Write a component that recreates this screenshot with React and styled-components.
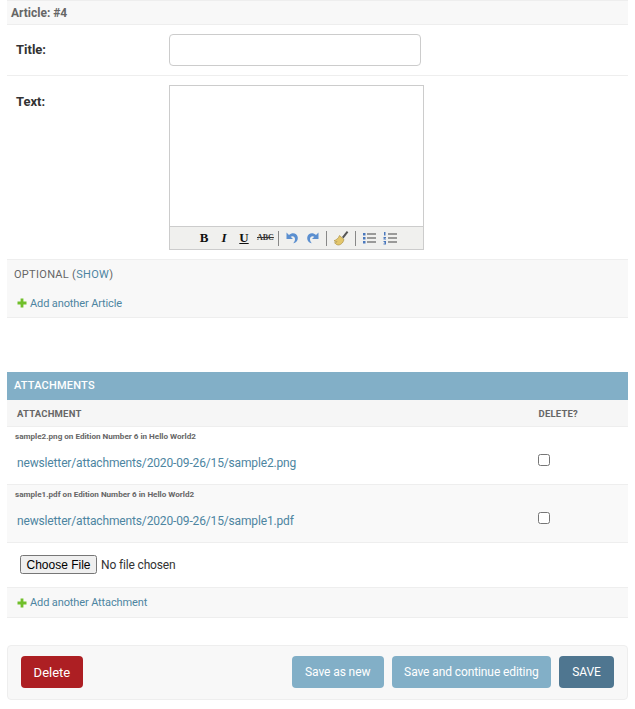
import React from 'react';
import styled, { createGlobalStyle } from 'styled-components';

const GlobalStyle = createGlobalStyle`
  html, body {
    margin: 0;
    padding: 0;
    background: #fff;
  }
  body {
    font-family: Roboto, "Liberation Sans", sans-serif;
    font-size: 14px;
    color: #333;
  }
`;

const Page = styled.div`
  width: 621px;
  margin: 0 7px;
`;

const InlineHead = styled.h3`
  margin: 0;
  height: 24px;
  box-sizing: border-box;
  border-top: 1px solid #eee;
  padding: 4px 4px 0;
  background: #f8f8f8;
  color: #666;
  font-size: 12px;
  line-height: 16px;
  font-weight: 700;
`;

const FormRow = styled.div`
  display: flex;
  align-items: flex-start;
  box-sizing: border-box;
  height: ${(p) => p.$height}px;
  padding-top: 9px;
  border-top: 1px solid #eee;
`;

const Label = styled.label`
  width: 162px;
  padding: ${(p) => p.$pad}px 0 0 9px;
  box-sizing: border-box;
  font-size: 13px;
  line-height: 16px;
  font-weight: 700;
  color: #333;
`;

const TextInput = styled.input`
  width: 252px;
  height: 32px;
  box-sizing: border-box;
  border: 1px solid #ccc;
  border-radius: 4px;
  background: #fff;
`;

const Editor = styled.div`
  width: 255px;
  height: 165px;
  box-sizing: border-box;
  border: 1px solid #ccc;
  display: flex;
  flex-direction: column;
`;

const EditorArea = styled.div`
  flex: 1;
  background: #fff;
`;

const Toolbar = styled.div`
  height: 22px;
  border-top: 1px solid #ccc;
  background: #f0f0ee;
  display: flex;
  align-items: center;
  gap: 5px;
  padding-left: 26px;
`;

const ToolGlyph = styled.span`
  width: ${(p) => p.$width || 16}px;
  text-align: center;
  font-family: "Liberation Serif", serif;
  font-size: ${(p) => p.$size || 13}px;
  line-height: 16px;
  font-weight: 700;
  color: ${(p) => p.$color || '#111'};
  font-style: ${(p) => (p.$italic ? 'italic' : 'normal')};
  text-decoration: ${(p) => p.$line || 'none'};
`;

const ToolSep = styled.span`
  width: 1px;
  height: 15px;
  background: #888;
`;

const ToolIcon = styled.svg`
  width: 16px;
  height: 16px;
  flex: none;
  margin: 0 ${(p) => p.$side || 0}px;
  transform: ${(p) => (p.$flip ? 'scaleX(-1)' : 'none')};
`;

const Collapsed = styled.div`
  height: 30px;
  box-sizing: border-box;
  border-top: 1px solid #eee;
  padding: 8px 7px 0;
  background: #f8f8f8;
  font-size: 11px;
  line-height: 14px;
  letter-spacing: 0.3px;
  color: #666;
`;

const Link = styled.a`
  color: #4d85a1;
  text-decoration: none;
`;

const AddRow = styled.div`
  height: ${(p) => p.$height}px;
  box-sizing: border-box;
  display: flex;
  align-items: center;
  gap: 3px;
  padding-left: 10px;
  background: #f8f8f8;
  border-bottom: 1px solid #eee;
  border-top: ${(p) => (p.$top ? '1px solid #eee' : '0')};
  font-size: 11px;
  letter-spacing: -0.12px;
  color: #4d85a1;
`;

const Spacer = styled.div`
  height: ${(p) => p.$height}px;
`;

const SectionHead = styled.h2`
  margin: 0;
  height: 28px;
  box-sizing: border-box;
  padding: 6px 7px 0;
  background: #82afc7;
  color: #fff;
  font-size: 11px;
  line-height: 15px;
  font-weight: 500;
  letter-spacing: 0.2px;
`;

const TableHead = styled.div`
  display: flex;
  justify-content: space-between;
  height: 27px;
  box-sizing: border-box;
  padding: 8px 50px 0 10px;
  background: #f6f6f6;
  border-bottom: 1px solid #eee;
  color: #666;
  font-size: 9.5px;
  line-height: 12px;
  font-weight: 700;
  letter-spacing: 0.2px;
`;

const AttachmentRow = styled.div`
  height: 58px;
  box-sizing: border-box;
  padding: 4px 0 0 8px;
  background: ${(p) => (p.$alt ? '#f9f9f9' : '#fff')};
  border-bottom: 1px solid #eee;
`;

const Original = styled.p`
  margin: 0;
  color: #666;
  font-size: 8.1px;
  line-height: 11px;
  font-weight: 700;
`;

const AttachmentBody = styled.div`
  display: flex;
  justify-content: space-between;
  align-items: center;
  margin-top: 12px;
  padding: 0 78px 0 2px;
`;

const FileLink = styled(Link)`
  font-size: 12px;
  line-height: 16px;
  letter-spacing: -0.15px;
`;

const Check = styled.input`
  width: 12px;
  height: 12px;
  margin: 0 0 6px;
`;

const UploadRow = styled.div`
  height: 44px;
  box-sizing: border-box;
  padding: 12px 0 0 13px;
`;

const FileInput = styled.input`
  font-family: Roboto, "Liberation Sans", sans-serif;
  font-size: 12px;
  letter-spacing: -0.15px;
  color: #333;

  &::file-selector-button {
    font-family: "Liberation Sans", Arial, sans-serif;
    font-size: 12px;
    letter-spacing: 0;
    height: 19px;
    width: 77px;
    padding: 0;
    margin-right: 4px;
  }
`;

const SubmitRow = styled.div`
  height: 55px;
  box-sizing: border-box;
  display: flex;
  align-items: flex-start;
  gap: 8px;
  padding: 10px 13px 0;
  background: #f8f8f8;
  border: 1px solid #eee;
  border-radius: 4px;
`;

const ActionButton = styled.button`
  height: 32px;
  width: ${(p) => p.$width}px;
  margin-right: ${(p) => p.$after || 0}px;
  padding: 0;
  border: 0;
  border-radius: 4px;
  background: ${(p) => p.$bg};
  color: #fff;
  font-family: Roboto, "Liberation Sans", sans-serif;
  font-size: ${(p) => p.$size || 12}px;
  letter-spacing: ${(p) => (p.$size ? 0 : -0.1)}px;
  font-weight: 400;
`;

const Plus = () => (
  <svg width="10" height="10" viewBox="0 0 10 10">
    <path d="M3.6 0.5h2.8v3.1h3.1v2.8h-3.1v3.1h-2.8v-3.1h-3.1v-2.8h3.1z" fill="#70bf2b" />
  </svg>
);

const Undo = ({ flip }) => (
  <ToolIcon viewBox="0 0 16 16" $flip={flip}>
    <path d="M2.500 2.500v6.500h6.500L6.700 6.700C8.600 5.400 11 6.400 11 9c0 1.600-.6 3-1.800 4.300 3.300-.5 5-3.200 4.500-6.300C13 3.200 8.400 1.800 5 4.900z" fill="#5b8fd0" />
  </ToolIcon>
);

const Broom = () => (
  <ToolIcon viewBox="0 0 16 16" $side={1}>
    <path d="M9 7l4.800-6 1.500 1.200L10.500 8.500z" fill="#555" />
    <path d="M6.500 5.500L11 9.500c-.5 2.500-2.500 5-5 5.500-1.500.2-3-.5-4.500-2.300 1.500 0 2.500-.5 2.500-1.200-.8.300-2 .1-3-.8C3 10 5.500 8.500 6.500 5.500z" fill="#e3c66b" stroke="#a58a3a" strokeWidth="0.6" />
  </ToolIcon>
);

const BulletList = () => (
  <ToolIcon viewBox="0 0 16 16">
    <path d="M2 3h2.500v2.500H2zM2 7h2.500v2.500H2zM2 11h2.500v2.500H2z" fill="#4a78bd" />
    <path d="M6 3.500h9v1H6zM6 7.500h9v1H6zM6 11.500h9v1H6z" fill="#444" />
  </ToolIcon>
);

const NumberList = () => (
  <ToolIcon viewBox="0 0 16 16">
    <path d="M2 2h1.500v3.500H2zM1.500 7h2.500v1H3v.6h1v1H1.500v-1.400h1.200V8H1.500zM1.500 11h2.500v3.500H1.500v-1h1.300v-.4H2v-.7h.8V12H1.500z" fill="#4a78bd" />
    <path d="M6 3.500h9v1H6zM6 7.500h9v1H6zM6 11.500h9v1H6z" fill="#444" />
  </ToolIcon>
);

const attachments = [
  { name: 'sample2.png', path: 'newsletter/attachments/2020-09-26/15/sample2.png' },
  { name: 'sample1.pdf', path: 'newsletter/attachments/2020-09-26/15/sample1.pdf' },
];

const App = () => {
  return (
    <Page>
      <GlobalStyle />
      <InlineHead>Article: #4</InlineHead>
      <FormRow $height={51}>
        <Label $pad={8}>Title:</Label>
        <TextInput type="text" />
      </FormRow>
      <FormRow $height={184}>
        <Label $pad={9}>Text:</Label>
        <Editor>
          <EditorArea />
          <Toolbar>
            <ToolGlyph>B</ToolGlyph>
            <ToolGlyph $italic $width={14}>I</ToolGlyph>
            <ToolGlyph $line="underline">U</ToolGlyph>
            <ToolGlyph $size={8} $color="#333" $line="line-through">ABC</ToolGlyph>
            <ToolSep />
            <Undo />
            <Undo flip />
            <ToolSep />
            <Broom />
            <ToolSep />
            <BulletList />
            <NumberList />
          </Toolbar>
        </Editor>
      </FormRow>
      <Collapsed>
        OPTIONAL (<Link href="#">SHOW</Link>)
      </Collapsed>
      <AddRow $height={29}>
        <Plus />
        <span>Add another Article</span>
      </AddRow>
      <Spacer $height={54} />
      <SectionHead>ATTACHMENTS</SectionHead>
      <TableHead>
        <span>ATTACHMENT</span>
        <span>DELETE?</span>
      </TableHead>
      {attachments.map((a, i) => (
        <AttachmentRow key={a.name} $alt={i === 1}>
          <Original>{a.name} on Edition Number 6 in Hello World2</Original>
          <AttachmentBody>
            <FileLink href="#">{a.path}</FileLink>
            <Check type="checkbox" />
          </AttachmentBody>
        </AttachmentRow>
      ))}
      <UploadRow>
        <FileInput type="file" />
      </UploadRow>
      <AddRow $height={31} $top>
        <Plus />
        <span>Add another Attachment</span>
      </AddRow>
      <Spacer $height={27} />
      <SubmitRow>
        <ActionButton $width={62} $size={13} $bg="#ad1f23" $after={201}>Delete</ActionButton>
        <ActionButton $width={92} $bg="#82afc7">Save as new</ActionButton>
        <ActionButton $width={160} $bg="#82afc7">Save and continue editing</ActionButton>
        <ActionButton $width={55} $bg="#4f7690">SAVE</ActionButton>
      </SubmitRow>
    </Page>
  );
};

export default App;
